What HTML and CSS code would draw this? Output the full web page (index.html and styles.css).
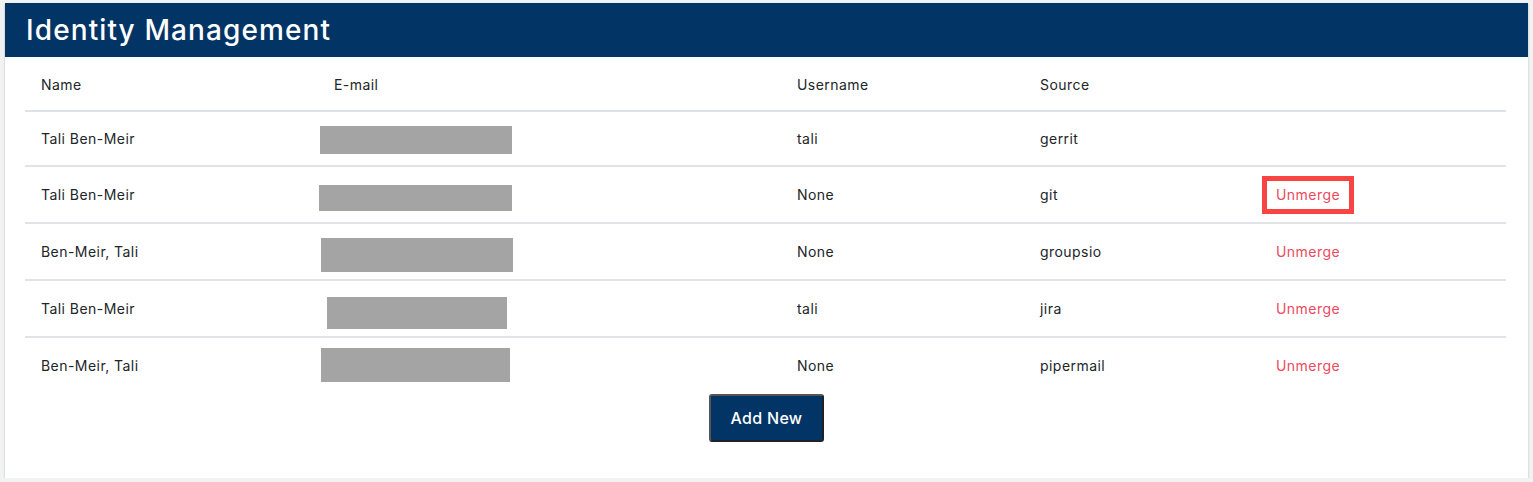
FILE: index.html
```html
<!DOCTYPE html>
<html>
<head>
<meta charset="utf-8">
<link rel="stylesheet" href="styles.css">
</head>
<body>
<div class="card">
  <div class="card-header"><h1 class="title">Identity Management</h1></div>
  <div class="card-body">
    <table class="idtable">
      <colgroup>
        <col class="c-name"><col class="c-email"><col class="c-user"><col class="c-src"><col class="c-act">
      </colgroup>
      <thead>
        <tr><th>Name</th><th>E-mail</th><th>Username</th><th>Source</th><th></th></tr>
      </thead>
      <tbody>
        <tr class="r1">
          <td>Tali Ben-Meir</td>
          <td><div class="redact" style="width:192px;height:28px;margin-left:-14px;transform:translateY(1px)"></div></td>
          <td>tali</td><td>gerrit</td><td></td>
        </tr>
        <tr class="r2">
          <td>Tali Ben-Meir</td>
          <td><div class="redact" style="width:193px;height:26px;margin-left:-15px;transform:translateY(3px)"></div></td>
          <td>None</td><td>git</td>
          <td><a class="unmerge highlighted">Unmerge</a></td>
        </tr>
        <tr>
          <td>Ben-Meir, Tali</td>
          <td><div class="redact" style="width:192px;height:34px;margin-left:-13px;transform:translateY(3px)"></div></td>
          <td>None</td><td>groupsio</td>
          <td><a class="unmerge">Unmerge</a></td>
        </tr>
        <tr>
          <td>Tali Ben-Meir</td>
          <td><div class="redact" style="width:180px;height:32px;margin-left:-7px;transform:translateY(4px)"></div></td>
          <td>tali</td><td>jira</td>
          <td><a class="unmerge">Unmerge</a></td>
        </tr>
        <tr class="last">
          <td>Ben-Meir, Tali</td>
          <td><div class="redact" style="width:189px;height:34px;margin-left:-13px;transform:translateY(-1px)"></div></td>
          <td>None</td><td>pipermail</td>
          <td><a class="unmerge">Unmerge</a></td>
        </tr>
      </tbody>
    </table>
    <div class="actions"><button class="btn-add">Add New</button></div>
  </div>
</div>
</body>
</html>
```
FILE: styles.css
```css
html, body {
  margin: 0;
  background: #f1f2f2;
}
body {
  padding: 3px 5px 0 5px;
  font-family: Inter, "Noto Sans", sans-serif;
  color: #212529;
}
.card {
  background: #fff;
  box-shadow: 0 1px 2px rgba(0,0,0,0.25);
  height: 475px;
}
.card-header {
  background: #023466;
  height: 54px;
  display: flex;
  align-items: center;
  padding-left: 21px;
}
.title {
  margin: 0;
  color: #fff;
  font-size: 28px;
  font-weight: 500;
  letter-spacing: 1.1px;
}
.card-body {
  padding: 0 22px 0 20px;
}
.idtable {
  width: 100%;
  border-collapse: collapse;
  table-layout: fixed;
  font-size: 14px;
  letter-spacing: 0.45px;
}
.c-name { width: 293px; }
.c-email { width: 463px; }
.c-user { width: 243px; }
.c-src { width: 236px; }
.idtable th {
  font-weight: 400;
  text-align: left;
  padding: 2px 16px 0 16px;
  height: 51px;
  border-bottom: 2px solid #dee2e6;
  vertical-align: middle;
}
.idtable td {
  padding: 0 16px;
  height: 55px;
  border-bottom: 2px solid #e2e3e6;
  vertical-align: middle;
}
.idtable tr.r1 td { height: 53px; }
.idtable tr.last td { border-bottom: none; height: 55px; }
.redact {
  background: #a4a4a4;
}
.unmerge {
  color: #ec4a5e;
  position: relative;
  display: inline-block;
}
.highlighted::after {
  content: "";
  position: absolute;
  left: -14px;
  top: -10px;
  width: 82px;
  height: 28px;
  border: 5px solid #f94444;
}
.actions {
  display: flex;
  justify-content: center;
  padding: 1px 0 0 2px;
}
.btn-add {
  background: #023466;
  color: #fff;
  font-family: Inter, "Noto Sans", sans-serif;
  font-size: 16px;
  font-weight: 500;
  letter-spacing: 0.3px;
  width: 115px;
  height: 48px;
  border: 2px solid #1f2328;
  border-top-color: #555;
  border-left-color: #555;
  border-radius: 3px;
}
```
